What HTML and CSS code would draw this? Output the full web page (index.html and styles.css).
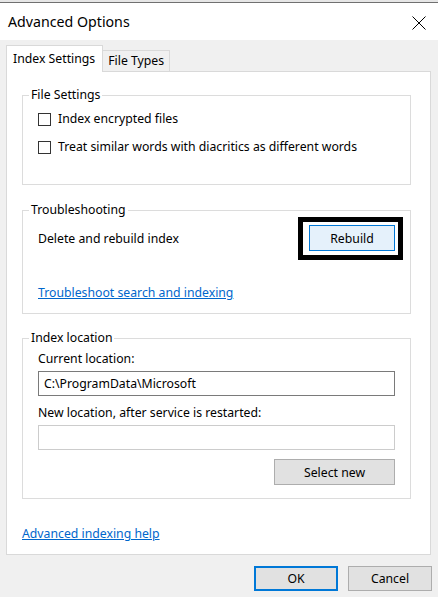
FILE: index.html
```html
<!DOCTYPE html>
<html>
<head>
<meta charset="utf-8">
<link rel="stylesheet" href="styles.css">
</head>
<body>
<div class="window">
  <div class="behind"></div>
  <div class="titlebar">
    <span class="title">Advanced Options</span>
    <svg class="close" width="14" height="14" viewBox="0 0 14 14"><path d="M0.5 0.5 L13.5 13.5 M13.5 0.5 L0.5 13.5" stroke="#000" stroke-width="1" fill="none"/></svg>
  </div>
  <div class="client">
    <div class="tabs">
      <div class="tab active">Index Settings</div>
      <div class="tab">File Types</div>
    </div>
    <div class="panel">
      <fieldset class="group group-file">
        <legend>File Settings</legend>
        <label class="check"><span class="box"></span>Index encrypted files</label>
        <label class="check"><span class="box"></span>Treat similar words with diacritics as different words</label>
      </fieldset>
      <fieldset class="group group-trouble">
        <legend>Troubleshooting</legend>
        <div class="rebuild-row">
          <span>Delete and rebuild index</span>
          <div class="focus-ring"><button class="btn btn-hot">Rebuild</button></div>
        </div>
        <a class="link link-trouble" href="#">Troubleshoot search and indexing</a>
      </fieldset>
      <fieldset class="group group-loc">
        <legend>Index location</legend>
        <div class="field-label">Current location:</div>
        <div class="input">C:\ProgramData\Microsoft</div>
        <div class="field-label second">New location, after service is restarted:</div>
        <div class="input disabled"></div>
        <div class="select-row"><button class="btn">Select new</button></div>
      </fieldset>
      <a class="link link-help" href="#">Advanced indexing help</a>
    </div>
    <div class="footer">
      <button class="btn btn-default">OK</button>
      <button class="btn">Cancel</button>
    </div>
  </div>
</div>
</body>
</html>
```
FILE: styles.css
```css
html, body {
  margin: 0;
  padding: 0;
}
body {
  width: 438px;
  height: 597px;
  overflow: hidden;
  background: #f0f0f0;
  font-family: "Segoe UI", "Noto Sans", sans-serif;
  font-size: 12.25px;
  color: #000;
}
.window {
  width: 438px;
  height: 597px;
  display: flex;
  flex-direction: column;
}
.behind {
  height: 2px;
  background: #e6e6e6;
  border-bottom: 1px solid #707070;
}
.titlebar {
  height: 37px;
  background: #fff;
  display: flex;
  align-items: center;
  justify-content: space-between;
  padding: 0 12px 0 8px;
}
.title {
  font-size: 14.2px;
  margin-top: -1px;
}
.close {
  display: block;
  margin-top: 2px;
}
.client {
  flex: 1;
  display: flex;
  flex-direction: column;
  padding: 6px 7px 0 6px;
}
.tabs {
  display: flex;
  align-items: flex-end;
  height: 25px;
  position: relative;
  z-index: 1;
}
.tab {
  height: 20px;
  line-height: 20px;
  padding: 0 5px;
  border: 1px solid #d9d9d9;
  border-bottom: none;
  border-left: none;
  background: #f0f0f0;
}
.tab.active {
  height: 26px;
  line-height: 26px;
  padding: 0 7px 0 6px;
  background: #fff;
  margin-bottom: -1px;
  border-left: 1px solid #d9d9d9;
}
.panel {
  height: 484px;
  box-sizing: border-box;
  background: #fff;
  border: 1px solid #d9d9d9;
  padding: 15px 19px 0 15px;
}
.group {
  margin: 0;
  border: 1px solid #dcdcdc;
  padding: 0 15px;
  min-width: 0;
}
.group legend {
  padding: 0 2px;
  margin-left: -9px;
  line-height: 16px;
}
.group-file {
  padding-top: 8px;
  padding-bottom: 29px;
}
.check {
  display: flex;
  align-items: center;
  height: 16px;
  line-height: 16px;
}
.check + .check {
  margin-top: 12px;
}
.box {
  width: 11px;
  height: 11px;
  border: 1px solid #333;
  background: #fff;
  margin-right: 7px;
  flex: none;
}
.group-trouble {
  margin-top: 17px;
  padding-right: 7px;
  padding-bottom: 12px;
}
.rebuild-row {
  display: flex;
  justify-content: space-between;
  align-items: center;
  margin-top: -1px;
}
.focus-ring {
  border: 5px solid #000;
  padding: 3px 3px 4px 6px;
}
.btn {
  font: inherit;
  color: #000;
  box-sizing: border-box;
  height: 26px;
  width: 86px;
  border: 1px solid #adadad;
  background: #e1e1e1;
  padding: 0;
  margin: 0;
}
.btn-hot {
  background: #e5f1fb;
  border-color: #0078d7;
}
.link {
  display: block;
  color: #0066cc;
  text-decoration: underline;
  line-height: 16px;
  width: max-content;
}
.link-trouble {
  margin-top: 25px;
}
.group-loc {
  margin-top: 16px;
  padding-bottom: 13px;
}
.field-label {
  line-height: 16px;
  margin-top: 5px;
}
.field-label.second {
  margin-top: 9px;
}
.input {
  box-sizing: border-box;
  height: 25px;
  line-height: 23px;
  margin-top: 4px;
  border: 1px solid #7a7a7a;
  padding: 0 5px;
  background: #fff;
}
.input.disabled {
  border-color: #cccccc;
}
.select-row {
  display: flex;
  justify-content: flex-end;
  margin-top: 9px;
}
.select-row .btn {
  width: 121px;
}
.link-help {
  margin-top: 27px;
}
.footer {
  display: flex;
  justify-content: flex-end;
  gap: 10px;
  margin-top: 11px;
  margin-right: -1px;
}
.footer .btn {
  width: 84px;
  height: 25px;
}
.btn-default {
  border: 2px solid #0078d7;
}
```
